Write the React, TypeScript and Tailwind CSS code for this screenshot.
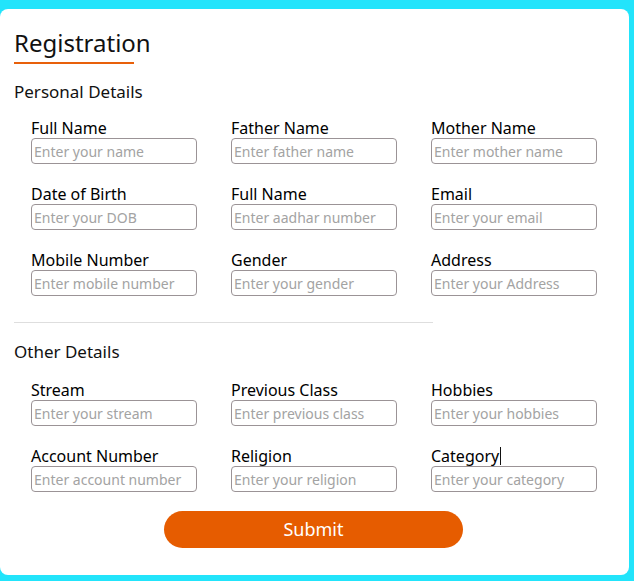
const font = { fontFamily: '"Noto Sans", "Open Sans", sans-serif' };

type Field = { label: string; placeholder: string; caret?: boolean };

const personal: Field[] = [
  { label: "Full Name", placeholder: "Enter your name" },
  { label: "Father Name", placeholder: "Enter father name" },
  { label: "Mother Name", placeholder: "Enter mother name" },
  { label: "Date of Birth", placeholder: "Enter your DOB" },
  { label: "Full Name", placeholder: "Enter aadhar number" },
  { label: "Email", placeholder: "Enter your email" },
  { label: "Mobile Number", placeholder: "Enter mobile number" },
  { label: "Gender", placeholder: "Enter your gender" },
  { label: "Address", placeholder: "Enter your Address" },
];

const other: Field[] = [
  { label: "Stream", placeholder: "Enter your stream" },
  { label: "Previous Class", placeholder: "Enter previous class" },
  { label: "Hobbies", placeholder: "Enter your hobbies" },
  { label: "Account Number", placeholder: "Enter account number" },
  { label: "Religion", placeholder: "Enter your religion" },
  { label: "Category", placeholder: "Enter your category", caret: true },
];

function FieldBox({ label, placeholder, caret }: Field) {
  return (
    <div className="flex flex-col">
      <label className="flex items-center text-[16px] leading-[20px] text-black h-[20px]">
        {label}
        {caret && <span className="ml-px inline-block w-px h-[18px] bg-[#111]" />}
      </label>
      <input
        placeholder={placeholder}
        className="w-[166px] h-[26px] rounded-[4px] border border-[#9b9396] px-[2px] text-[14px] text-[#333] placeholder:text-[#a3a3a3] outline-none"
        style={font}
      />
    </div>
  );
}

export default function App() {
  return (
    <div className="min-h-[581px] bg-[#22e4fb] pt-[9px]" style={font}>
      <div className="w-[629px] h-[566px] bg-white rounded-[8px] px-[14px] pt-[17px]">
        <h1 className="text-[24px] leading-[34px] text-[#111]">Registration</h1>
        <div className="mt-[2px] w-[120px] h-[2px] bg-[#e8600a]" />
        <h2 className="mt-[16px] text-[17px] leading-[24px] text-[#111]">Personal Details</h2>
        <div className="mt-[14px] pl-[17px] grid grid-cols-[200px_200px_200px] gap-y-[20px]">
          {personal.map((f, i) => (
            <FieldBox key={i} {...f} />
          ))}
        </div>
        <div className="mt-[26px] w-[419px] h-px bg-[#dedede]" />
        <h2 className="mt-[17px] text-[17px] leading-[24px] text-[#111]">Other Details</h2>
        <div className="mt-[16px] pl-[17px] grid grid-cols-[200px_200px_200px] gap-y-[20px]">
          {other.map((f, i) => (
            <FieldBox key={i} {...f} />
          ))}
        </div>
        <div className="mt-[19px] pl-[150px]">
          <button className="w-[299px] h-[37px] rounded-full bg-[#e65c00] text-white text-[18px]" style={font}>
            Submit
          </button>
        </div>
      </div>
    </div>
  );
}
